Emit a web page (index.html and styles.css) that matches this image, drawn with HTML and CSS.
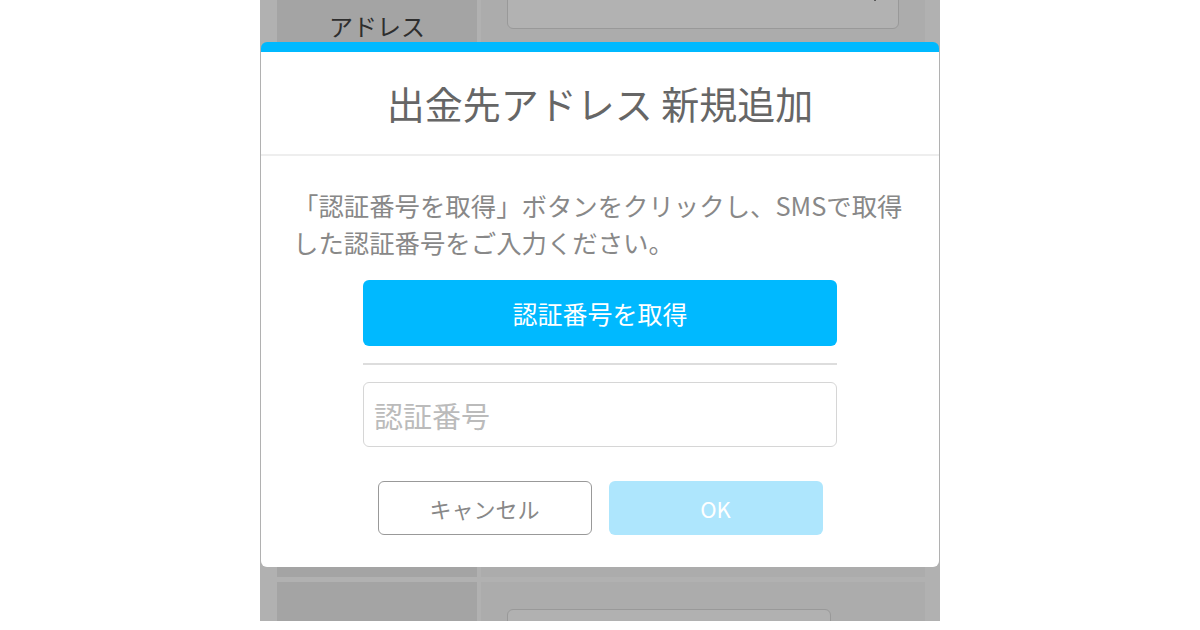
FILE: index.html
```html
<!DOCTYPE html>
<html lang="ja">
<head>
    <meta charset="UTF-8">
    <meta name="viewport" content="width=device-width, initial-scale=1.0">
    <title>出金先アドレス 新規追加</title>
    <link rel="stylesheet" href="styles.css">
</head>
<body>
    <div class="screen">
        <!-- form behind the dialog (dimmed) -->
        <div class="form">
            <div class="row row-top">
                <div class="label">アドレス</div>
                <div class="field">
                    <div class="select"><span class="chevron"></span></div>
                    <div class="back-btn"></div>
                </div>
            </div>
            <div class="row row-bottom">
                <div class="label"></div>
                <div class="field">
                    <div class="back-input"></div>
                </div>
            </div>
        </div>

        <div class="modal">
            <div class="modal-header">
                <h2>出金先アドレス 新規追加</h2>
            </div>
            <div class="modal-body">
                <p class="note">「認証番号を取得」ボタンをクリックし、SMSで取得した認証番号をご入力ください。</p>
                <button class="btn-code">認証番号を取得</button>
                <hr class="sep">
                <input class="code-input" type="text" placeholder="認証番号">
                <div class="actions">
                    <button class="btn-cancel">キャンセル</button>
                    <button class="btn-ok" disabled>OK</button>
                </div>
            </div>
        </div>
    </div>
</body>
</html>
```

FILE: styles.css
```css
body {
    margin: 0;
    background: #fff;
    font-family: "Noto Sans CJK JP", "Noto Sans", sans-serif;
}
.screen {
    position: relative;
    width: 680px;
    height: 621px;
    margin: 0 auto;
    background-color: #b1b1b1;
    overflow: hidden;
}
.form {
    padding: 0 15px 0 17px;
    display: flex;
    flex-direction: column;
    gap: 5px;
}
.row {
    display: flex;
    gap: 4px;
}
.row-top {
    height: 577px;
}
.row-bottom {
    height: 60px;
}
.label {
    width: 200px;
    flex-shrink: 0;
    background-color: #a4a4a4;
    color: #2e2e2e;
    font-size: 24px;
    text-align: center;
    padding-top: 8px;
    box-sizing: border-box;
}
.field {
    flex: 1;
    background-color: #acacac;
    padding: 0 26px;
}
.select {
    position: relative;
    height: 60px;
    margin-top: -33px;
    background-color: #b2b2b2;
    border: 1px solid #999;
    border-radius: 6px;
}
.chevron {
    position: absolute;
    right: 18px;
    top: 21px;
    width: 8px;
    height: 8px;
    border-right: 2px solid #444;
    border-bottom: 2px solid #444;
    transform: rotate(45deg);
}
.back-btn {
    width: 127px;
    height: 40px;
    margin: 14px 0 0 3px;
    background-color: #0d7fae;
    border-radius: 6px;
}
.back-input {
    width: 322px;
    height: 50px;
    margin-top: 27px;
    background-color: #b1b1b1;
    border: 1px solid #999;
    border-radius: 6px;
}

.modal {
    position: absolute;
    top: 42px;
    left: 1px;
    right: 1px;
    background-color: #fff;
    border-top: 10px solid #00b9ff;
    border-radius: 6px;
}
.modal-header {
    height: 102px;
    display: flex;
    align-items: center;
    justify-content: center;
    border-bottom: 2px solid #eee;
}
.modal-header h2 {
    margin: 0 0 2px;
    font-size: 38px;
    font-weight: 400;
    color: #666;
}
.modal-body {
    padding: 31px 32px 32px;
}
.note {
    margin: 0 0 19px;
    font-size: 25.4px;
    line-height: 37px;
    color: #888;
}
.btn-code {
    display: block;
    width: 474px;
    height: 66px;
    margin: 0 auto;
    background-color: #00b9ff;
    color: #fff;
    border: none;
    border-radius: 6px;
    font-family: inherit;
    font-size: 25px;
}
.sep {
    width: 474px;
    margin: 17px auto;
    border: none;
    border-top: 2px solid #ddd;
}
.code-input {
    display: block;
    width: 474px;
    height: 65px;
    margin: 0 auto;
    box-sizing: border-box;
    padding: 0 10px;
    border: 1px solid #d6d6d6;
    border-radius: 6px;
    font-family: inherit;
    font-size: 29px;
    color: #666;
}
.code-input::placeholder {
    color: #bbb;
}
.actions {
    display: flex;
    justify-content: center;
    gap: 17px;
    margin-top: 34px;
}
.actions button {
    width: 214px;
    height: 54px;
    border-radius: 6px;
    font-family: inherit;
    font-size: 22px;
}
.btn-cancel {
    background-color: #fff;
    border: 1px solid #999;
    color: #888;
}
.btn-ok {
    background-color: #aee6fd;
    border: none;
    color: #fff;
}
```
